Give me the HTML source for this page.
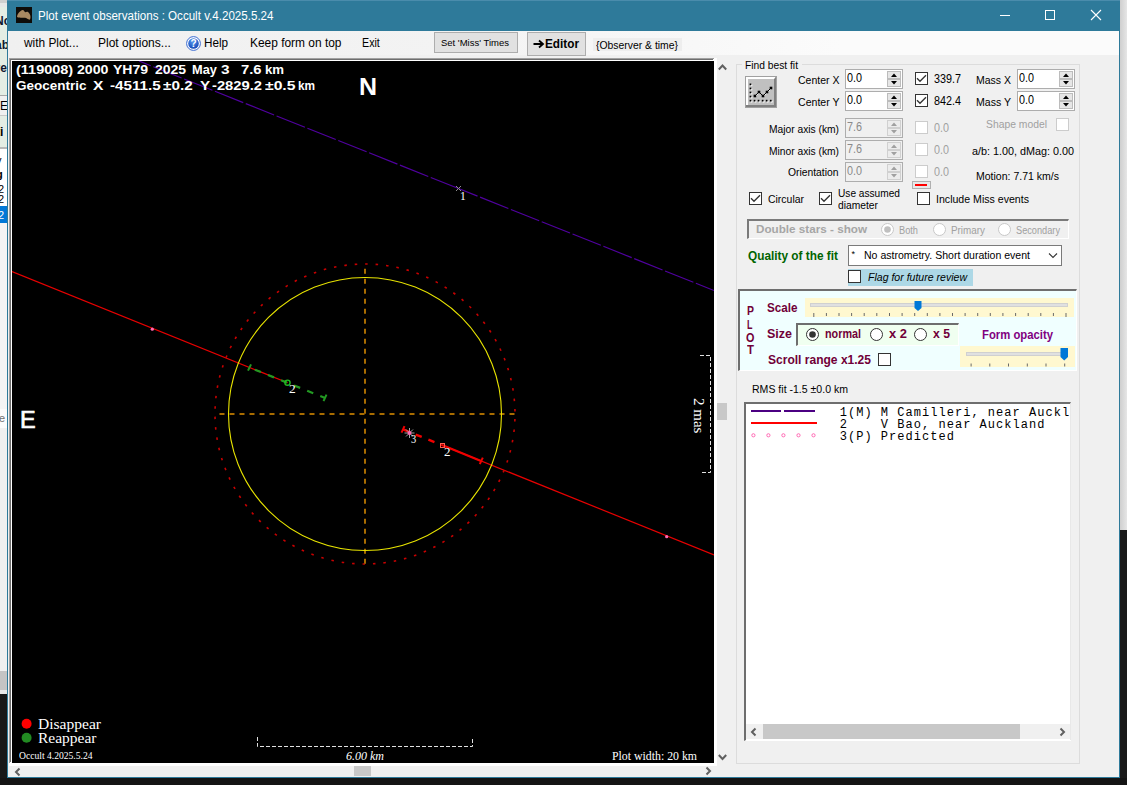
<!DOCTYPE html>
<html><head><meta charset="utf-8"><style>
html,body{margin:0;padding:0;width:1127px;height:785px;overflow:hidden;background:#f0f0f0;font-family:"Liberation Sans",sans-serif;}
#root{position:relative;width:1127px;height:785px;overflow:hidden;}
</style></head><body><div id="root">
<div style="position:absolute;left:0px;top:0px;width:7px;height:3px;background:#cfcfcf;"></div>
<div style="position:absolute;left:0px;top:3px;width:7px;height:4px;background:#e6e6e6;"></div>
<div style="position:absolute;left:0px;top:7px;width:7px;height:88px;background:#e4ede4;"></div>
<div style="position:absolute;left:0px;top:95px;width:7px;height:1px;background:#a8a8a8;"></div>
<div style="position:absolute;left:0px;top:96px;width:7px;height:19px;background:#f0f0f0;"></div>
<div style="position:absolute;left:0px;top:115px;width:7px;height:1px;background:#c8c8c8;"></div>
<div style="position:absolute;left:0px;top:116px;width:7px;height:31px;background:#e4ede4;"></div>
<div style="position:absolute;left:0px;top:147px;width:7px;height:2px;background:#b8b8b8;"></div>
<div style="position:absolute;left:0px;top:149px;width:7px;height:57px;background:#ffffff;"></div>
<div style="position:absolute;left:0px;top:205.5px;width:7px;height:17px;background:#0078d7;"></div>
<div style="position:absolute;left:0px;top:222.5px;width:7px;height:186px;background:#f4f4f4;"></div>
<div style="position:absolute;left:0px;top:408.5px;width:7px;height:20.5px;background:#fbfbfb;"></div>
<div style="position:absolute;left:0px;top:428px;width:7px;height:242px;background:#f0f0f0;"></div>
<div style="position:absolute;left:0px;top:671px;width:7px;height:19px;background:#c4c4c4;"></div>
<div style="position:absolute;left:0px;top:690px;width:7px;height:4px;background:#e8e8e8;"></div>
<div style="position:absolute;left:0px;top:694px;width:7px;height:91px;background:#181818;"></div>
<div style="position:absolute;left:-5px;top:21.04px;line-height:0;white-space:pre;font-family:'Liberation Sans',sans-serif;font-size:12px;font-weight:bold;font-style:normal;color:#101830;">Nc</div>
<div style="position:absolute;left:-5px;top:44.84px;line-height:0;white-space:pre;font-family:'Liberation Sans',sans-serif;font-size:12px;font-weight:bold;font-style:normal;color:#101830;">ab</div>
<div style="position:absolute;left:-4.5px;top:68.44px;line-height:0;white-space:pre;font-family:'Liberation Sans',sans-serif;font-size:12px;font-weight:bold;font-style:normal;color:#101830;">re</div>
<div style="position:absolute;left:0px;top:105.84px;line-height:0;white-space:pre;font-family:'Liberation Sans',sans-serif;font-size:12px;font-weight:normal;font-style:normal;color:#000;">E</div>
<div style="position:absolute;left:-4px;top:131.84px;line-height:0;white-space:pre;font-family:'Liberation Sans',sans-serif;font-size:12px;font-weight:bold;font-style:normal;color:#000;">ti</div>
<div style="position:absolute;left:-4px;top:159.69px;line-height:0;white-space:pre;font-family:'Liberation Sans',sans-serif;font-size:11px;font-weight:normal;font-style:normal;color:#000;">v</div>
<div style="position:absolute;left:-4px;top:173.69px;line-height:0;white-space:pre;font-family:'Liberation Sans',sans-serif;font-size:11px;font-weight:bold;font-style:normal;color:#000;">g</div>
<div style="position:absolute;left:-2px;top:189.49px;line-height:0;white-space:pre;font-family:'Liberation Sans',sans-serif;font-size:11px;font-weight:normal;font-style:normal;color:#000;">2</div>
<div style="position:absolute;left:-2px;top:199.49px;line-height:0;white-space:pre;font-family:'Liberation Sans',sans-serif;font-size:11px;font-weight:normal;font-style:normal;color:#000;">2</div>
<div style="position:absolute;left:-2px;top:214.79px;line-height:0;white-space:pre;font-family:'Liberation Sans',sans-serif;font-size:11px;font-weight:normal;font-style:normal;color:#fff;">2</div>
<div style="position:absolute;left:-6px;top:418.19px;line-height:0;white-space:pre;font-family:'Liberation Sans',sans-serif;font-size:11px;font-weight:normal;font-style:normal;color:#707070;">ile</div>
<div style="position:absolute;left:1120px;top:0px;width:7px;height:530px;background:linear-gradient(to right,#cfcfcf,#e6e6e6);"></div>
<div style="position:absolute;left:1120px;top:530px;width:7px;height:255px;background:#1a1a1a;"></div>
<div style="position:absolute;left:0px;top:778px;width:1127px;height:7px;background:#141414;"></div>
<div style="position:absolute;left:7px;top:0px;width:1113px;height:778px;background:#2e7a9a;"></div>
<div style="position:absolute;left:8px;top:31px;width:1111px;height:746px;background:#f0f0f0;"></div>
<div style="position:absolute;left:7px;top:0px;width:1113px;height:1px;background:#4a8cac;"></div>
<div style="position:absolute;left:16px;top:7px;width:16px;height:16px;background:#0e0c09;"></div>
<svg style="position:absolute;left:16px;top:7px" width="16" height="16"><path d="M1 9.5 C1.5 6.5 4.5 3.5 6.7 3 C8 3 8.5 5 9.2 5.2 C10 5 11 4.6 12 5 C13.5 6 14.5 8 14.5 10 C14.5 11.5 14 12.8 13.5 12.8 C12 12.5 10.5 11 9 10.8 C7 10.5 4.5 10.8 3 10.6 C1.8 10.4 0.9 10 1 9.5 Z" fill="#a98a62"/></svg>
<div style="position:absolute;left:37.5px;top:15.84px;line-height:0;white-space:pre;font-family:'Liberation Sans',sans-serif;font-size:12px;font-weight:normal;font-style:normal;color:#ffffff;transform:scaleX(0.9654);transform-origin:0 0;">Plot event observations : Occult v.4.2025.5.24</div>
<div style="position:absolute;left:1000px;top:15px;width:10px;height:1px;background:#fff;"></div>
<div style="position:absolute;left:1045px;top:10px;width:8px;height:8px;border:1px solid #fff;"></div>
<svg style="position:absolute;left:1090px;top:9px" width="12" height="12"><path d="M1 1 L11 11 M11 1 L1 11" stroke="#fff" stroke-width="1.1"/></svg>
<div style="position:absolute;left:8px;top:31px;width:1111px;height:24px;background:linear-gradient(to right,#f0f0f0 0%,#f3f3f3 40%,#fbfbfb 75%,#fbfbfb 100%);"></div>
<div style="position:absolute;left:24.29px;top:43.04px;line-height:0;white-space:pre;font-family:'Liberation Sans',sans-serif;font-size:12px;font-weight:normal;font-style:normal;color:#000;transform:scaleX(0.9889);transform-origin:0 0;">with Plot...</div>
<div style="position:absolute;left:98.3px;top:43.04px;line-height:0;white-space:pre;font-family:'Liberation Sans',sans-serif;font-size:12px;font-weight:normal;font-style:normal;color:#000;transform:scaleX(1.0017);transform-origin:0 0;">Plot options...</div>
<svg style="position:absolute;left:185.5px;top:35.5px" width="15" height="15"><defs><radialGradient id="hg" cx="45%" cy="30%" r="70%"><stop offset="0" stop-color="#5a9af0"/><stop offset="1" stop-color="#1448b8"/></radialGradient></defs><circle cx="7.5" cy="7.5" r="6.9" fill="#fff" stroke="#3a6ad0" stroke-width="1"/><circle cx="7.5" cy="7.5" r="5.3" fill="url(#hg)"/><text x="7.6" y="11.3" text-anchor="middle" font-family="Liberation Sans" font-weight="bold" font-size="10" fill="#fff">?</text></svg>
<div style="position:absolute;left:204.1px;top:43.04px;line-height:0;white-space:pre;font-family:'Liberation Sans',sans-serif;font-size:12px;font-weight:normal;font-style:normal;color:#000;transform:scaleX(0.9758);transform-origin:0 0;">Help</div>
<div style="position:absolute;left:250.2px;top:43.04px;line-height:0;white-space:pre;font-family:'Liberation Sans',sans-serif;font-size:12px;font-weight:normal;font-style:normal;color:#000;transform:scaleX(0.9937);transform-origin:0 0;">Keep form on top</div>
<div style="position:absolute;left:362.4px;top:43.04px;line-height:0;white-space:pre;font-family:'Liberation Sans',sans-serif;font-size:12px;font-weight:normal;font-style:normal;color:#000;transform:scaleX(0.8902);transform-origin:0 0;">Exit</div>
<div style="position:absolute;left:434px;top:32px;width:82px;height:19px;background:#e1e1e1;border:1px solid #adadad;"></div>
<div style="position:absolute;left:440.8px;top:42.80px;line-height:0;white-space:pre;font-family:'Liberation Sans',sans-serif;font-size:9.8px;font-weight:normal;font-style:normal;color:#000;transform:scaleX(0.9683);transform-origin:0 0;">Set 'Miss' Times</div>
<div style="position:absolute;left:527px;top:32px;width:57px;height:22px;background:#e1e1e1;border:1px solid #adadad;"></div>
<svg style="position:absolute;left:533px;top:39px" width="12" height="10"><path d="M0.5 5 H9.5 M6 1.5 L10 5 L6 8.5" fill="none" stroke="#000" stroke-width="1.8"/></svg>
<div style="position:absolute;left:544.5px;top:44.09px;line-height:0;white-space:pre;font-family:'Liberation Sans',sans-serif;font-size:13px;font-weight:bold;font-style:normal;color:#000;transform:scaleX(0.9052);transform-origin:0 0;">Editor</div>
<div style="position:absolute;left:593px;top:38px;width:89px;height:13px;background:#eeeeee;"></div>
<div style="position:absolute;left:596px;top:45.01px;line-height:0;white-space:pre;font-family:'Liberation Sans',sans-serif;font-size:11.5px;font-weight:normal;font-style:normal;color:#000;transform:scaleX(0.9034);transform-origin:0 0;">{Observer &amp; time}</div>
<div style="position:absolute;left:9px;top:58px;width:708px;height:708px;background:#ffffff;"></div>
<div style="position:absolute;left:9px;top:58px;width:705px;height:1px;background:#a0a0a0;"></div>
<div style="position:absolute;left:9px;top:59px;width:704px;height:1px;background:#6e6e6e;"></div>
<div style="position:absolute;left:9px;top:58px;width:1px;height:705px;background:#a0a0a0;"></div>
<div style="position:absolute;left:10px;top:59px;width:1px;height:703px;background:#6e6e6e;"></div>
<div style="position:absolute;left:12px;top:61px;width:702px;height:702px;background:#000000;"></div>
<div style="position:absolute;left:11px;top:766px;width:706px;height:11px;background:#f0f0f0;"></div>
<svg style="position:absolute;left:12.5px;top:766.5px" width="10" height="10"><path d="M6.5 1.5 L3 5 L6.5 8.5" fill="none" stroke="#606060" stroke-width="2"/></svg>
<svg style="position:absolute;left:703px;top:766px" width="10" height="10"><path d="M3.5 1.5 L7 5 L3.5 8.5" fill="none" stroke="#606060" stroke-width="2"/></svg>
<div style="position:absolute;left:354px;top:766px;width:17px;height:10px;background:#c8c8c8;"></div>
<div style="position:absolute;left:717px;top:57px;width:14px;height:720px;background:#f0f0f0;"></div>
<svg style="position:absolute;left:717px;top:62px" width="11" height="10"><path d="M1.8 7.5 L5.5 3.5 L9.2 7.5" fill="none" stroke="#606060" stroke-width="2"/></svg>
<svg style="position:absolute;left:717px;top:752px" width="11" height="10"><path d="M1.8 3 L5.5 7 L9.2 3" fill="none" stroke="#606060" stroke-width="2"/></svg>
<div style="position:absolute;left:717px;top:403px;width:10px;height:17px;background:#c8c8c8;"></div>
<svg style="position:absolute;left:12px;top:61px" width="702" height="702" viewBox="12 61 702 702">
<line x1="139" y1="61" x2="458.5" y2="188.5" stroke="#5000a0" stroke-width="1.15" stroke-dasharray="30.5 2.7" stroke-dashoffset="17.85"/>
<line x1="458.5" y1="188.5" x2="714" y2="290.5" stroke="#5000a0" stroke-width="1.15" stroke-dasharray="30.5 2.7" stroke-dashoffset="10"/>
<line x1="12" y1="271.6" x2="287.6" y2="382.8" stroke="#e80000" stroke-width="1.2"/>
<line x1="442" y1="445.1" x2="714" y2="554.9" stroke="#e80000" stroke-width="1.2"/>
<line x1="442" y1="445.1" x2="481" y2="460.9" stroke="#f00000" stroke-width="2.2"/>
<line x1="403" y1="429.4" x2="442" y2="445.1" stroke="#f00000" stroke-width="2.4" stroke-dasharray="6.5 7.2"/>
<line x1="249.5" y1="367.5" x2="325" y2="397.9" stroke="#229922" stroke-width="2.2" stroke-dasharray="6.5 7.6" stroke-dashoffset="8.3"/>
<circle cx="365" cy="414" r="150" fill="none" stroke="#c80000" stroke-width="1.6" stroke-dasharray="2.5 7.972" stroke-dashoffset="5.36"/>
<line x1="215" y1="414" x2="515" y2="414" stroke="#a86c00" stroke-width="2" stroke-dasharray="5 5" stroke-dashoffset="-4.5"/>
<line x1="365" y1="264" x2="365" y2="564" stroke="#a86c00" stroke-width="2" stroke-dasharray="5 5" stroke-dashoffset="-4.8"/>
<circle cx="365" cy="414" r="136.5" fill="none" stroke="#e8e400" stroke-width="1.1"/>
<!-- ticks -->
<line x1="248" y1="370.7" x2="251" y2="364.3" stroke="#229922" stroke-width="2"/>
<line x1="323.5" y1="401.1" x2="326.5" y2="394.7" stroke="#229922" stroke-width="2"/>
<line x1="401.5" y1="432.6" x2="404.5" y2="426.2" stroke="#f00000" stroke-width="2"/>
<line x1="479.8" y1="464.1" x2="482.8" y2="457.7" stroke="#f00000" stroke-width="2"/>
<circle cx="287.5" cy="382.7" r="2.6" fill="none" stroke="#22bb22" stroke-width="1.4"/>
<rect x="440.5" y="443.5" width="4" height="4" fill="none" stroke="#ff6050" stroke-width="1"/>
<circle cx="152.3" cy="329.2" r="1.6" fill="#ff69b4"/>
<circle cx="666.7" cy="536.7" r="1.6" fill="#ff69b4"/>
<g stroke="#a0a0a0" stroke-width="1">
<line x1="404.5" y1="433" x2="414.5" y2="433"/><line x1="409.5" y1="428" x2="409.5" y2="438"/>
<line x1="406" y1="429.5" x2="413" y2="436.5"/><line x1="413" y1="429.5" x2="406" y2="436.5"/>
</g>
<circle cx="409.5" cy="433" r="2" fill="#ff69b4"/>
<g stroke="#909090" stroke-width="1">
<line x1="456" y1="186" x2="461" y2="191"/><line x1="461" y1="186" x2="456" y2="191"/>
</g>
<!-- scale bar -->
<path d="M257.5 737 V746.5 H472.5 V737" fill="none" stroke="#e0e0e0" stroke-width="1" stroke-dasharray="4 2"/>
<!-- 2 mas bar -->
<path d="M700 355.5 H710.5 V472.5 H700" fill="none" stroke="#e0e0e0" stroke-width="1" stroke-dasharray="4 2"/>
<circle cx="26.6" cy="723.7" r="5" fill="#ff0000"/>
<circle cx="26.6" cy="737.7" r="5" fill="#228b22"/>
</svg>
<div style="position:absolute;left:692.5px;top:397.5px;width:12px;height:35px;"><div style="position:absolute;left:12px;top:0;transform-origin:0 0;transform:rotate(90deg);white-space:pre;font-family:'Liberation Serif',serif;font-size:15px;line-height:12px;color:#fff;">2 mas</div></div>
<div style="position:absolute;left:15.7px;top:70.49px;line-height:0;white-space:pre;font-family:'Liberation Sans',sans-serif;font-size:13px;font-weight:bold;font-style:normal;color:#fff;transform:scaleX(1.1139);transform-origin:0 0;">(119008)</div>
<div style="position:absolute;left:76.8px;top:70.49px;line-height:0;white-space:pre;font-family:'Liberation Sans',sans-serif;font-size:13px;font-weight:bold;font-style:normal;color:#fff;transform:scaleX(1.0875);transform-origin:0 0;">2000</div>
<div style="position:absolute;left:113.0px;top:70.49px;line-height:0;white-space:pre;font-family:'Liberation Sans',sans-serif;font-size:13px;font-weight:bold;font-style:normal;color:#fff;transform:scaleX(1.0778);transform-origin:0 0;">YH79</div>
<div style="position:absolute;left:155.3px;top:70.49px;line-height:0;white-space:pre;font-family:'Liberation Sans',sans-serif;font-size:13px;font-weight:bold;font-style:normal;color:#fff;transform:scaleX(1.0770);transform-origin:0 0;">2025</div>
<div style="position:absolute;left:191.5px;top:70.49px;line-height:0;white-space:pre;font-family:'Liberation Sans',sans-serif;font-size:13px;font-weight:bold;font-style:normal;color:#fff;transform:scaleX(0.9824);transform-origin:0 0;">May</div>
<div style="position:absolute;left:220.9px;top:70.49px;line-height:0;white-space:pre;font-family:'Liberation Sans',sans-serif;font-size:13px;font-weight:bold;font-style:normal;color:#fff;transform:scaleX(1.1857);transform-origin:0 0;">3</div>
<div style="position:absolute;left:241.3px;top:70.49px;line-height:0;white-space:pre;font-family:'Liberation Sans',sans-serif;font-size:13px;font-weight:bold;font-style:normal;color:#fff;transform:scaleX(1.1378);transform-origin:0 0;">7.6</div>
<div style="position:absolute;left:265.4px;top:70.49px;line-height:0;white-space:pre;font-family:'Liberation Sans',sans-serif;font-size:13px;font-weight:bold;font-style:normal;color:#fff;transform:scaleX(1.0148);transform-origin:0 0;">km</div>
<div style="position:absolute;left:16.4px;top:86.49px;line-height:0;white-space:pre;font-family:'Liberation Sans',sans-serif;font-size:13px;font-weight:bold;font-style:normal;color:#fff;transform:scaleX(1.0387);transform-origin:0 0;">Geocentric</div>
<div style="position:absolute;left:93.0px;top:86.49px;line-height:0;white-space:pre;font-family:'Liberation Sans',sans-serif;font-size:13px;font-weight:bold;font-style:normal;color:#fff;transform:scaleX(1.2000);transform-origin:0 0;">X</div>
<div style="position:absolute;left:110.1px;top:86.49px;line-height:0;white-space:pre;font-family:'Liberation Sans',sans-serif;font-size:13px;font-weight:bold;font-style:normal;color:#fff;transform:scaleX(1.1705);transform-origin:0 0;">-4511.5</div>
<div style="position:absolute;left:162.8px;top:86.49px;line-height:0;white-space:pre;font-family:'Liberation Sans',sans-serif;font-size:13px;font-weight:bold;font-style:normal;color:#fff;transform:scaleX(1.1771);transform-origin:0 0;">±0.2</div>
<div style="position:absolute;left:199.8px;top:86.49px;line-height:0;white-space:pre;font-family:'Liberation Sans',sans-serif;font-size:13px;font-weight:bold;font-style:normal;color:#fff;transform:scaleX(1.1667);transform-origin:0 0;">Y</div>
<div style="position:absolute;left:211.8px;top:86.49px;line-height:0;white-space:pre;font-family:'Liberation Sans',sans-serif;font-size:13px;font-weight:bold;font-style:normal;color:#fff;transform:scaleX(1.1354);transform-origin:0 0;">-2829.2</div>
<div style="position:absolute;left:264.6px;top:86.49px;line-height:0;white-space:pre;font-family:'Liberation Sans',sans-serif;font-size:13px;font-weight:bold;font-style:normal;color:#fff;transform:scaleX(1.2091);transform-origin:0 0;">±0.5</div>
<div style="position:absolute;left:297.8px;top:86.49px;line-height:0;white-space:pre;font-family:'Liberation Sans',sans-serif;font-size:13px;font-weight:bold;font-style:normal;color:#fff;transform:scaleX(0.9106);transform-origin:0 0;">km</div>
<div style="position:absolute;left:359.26px;top:86.68px;line-height:0;white-space:pre;font-family:'Liberation Sans',sans-serif;font-size:24px;font-weight:bold;font-style:normal;color:#fff;transform:scaleX(1.0400);transform-origin:0 0;">N</div>
<div style="position:absolute;left:20.19px;top:419.81px;line-height:0;white-space:pre;font-family:'Liberation Sans',sans-serif;font-size:24.5px;font-weight:normal;font-style:normal;color:#fff;transform:scaleX(0.9571);transform-origin:0 0;-webkit-text-stroke:0.7px #fff;">E</div>
<div style="position:absolute;left:459.84px;top:195.65px;line-height:0;white-space:pre;font-family:'Liberation Serif',sans-serif;font-size:13.5px;font-weight:normal;font-style:normal;color:#fff;transform:scaleX(0.8600);transform-origin:0 0;">1</div>
<div style="position:absolute;left:289.0px;top:389.45px;line-height:0;white-space:pre;font-family:'Liberation Serif',sans-serif;font-size:13.5px;font-weight:normal;font-style:normal;color:#fff;transform:scaleX(1.0000);transform-origin:0 0;">2</div>
<div style="position:absolute;left:411.0px;top:439.45px;line-height:0;white-space:pre;font-family:'Liberation Serif',sans-serif;font-size:13.5px;font-weight:normal;font-style:normal;color:#fff;transform:scaleX(0.7714);transform-origin:0 0;">3</div>
<div style="position:absolute;left:444.2px;top:452.45px;line-height:0;white-space:pre;font-family:'Liberation Serif',sans-serif;font-size:13.5px;font-weight:normal;font-style:normal;color:#fff;transform:scaleX(0.9667);transform-origin:0 0;">2</div>
<div style="position:absolute;left:38px;top:723.77px;line-height:0;white-space:pre;font-family:'Liberation Serif',sans-serif;font-size:15.5px;font-weight:normal;font-style:normal;color:#fff;transform:scaleX(1.0025);transform-origin:0 0;">Disappear</div>
<div style="position:absolute;left:38px;top:737.77px;line-height:0;white-space:pre;font-family:'Liberation Serif',sans-serif;font-size:15.5px;font-weight:normal;font-style:normal;color:#fff;transform:scaleX(0.9995);transform-origin:0 0;">Reappear</div>
<div style="position:absolute;left:19px;top:755.63px;line-height:0;white-space:pre;font-family:'Liberation Serif',sans-serif;font-size:10px;font-weight:normal;font-style:normal;color:#fff;transform:scaleX(0.9588);transform-origin:0 0;">Occult 4.2025.5.24</div>
<div style="position:absolute;left:346px;top:756.28px;line-height:0;white-space:pre;font-family:'Liberation Serif',sans-serif;font-size:12.5px;font-weight:normal;font-style:italic;color:#fff;transform:scaleX(0.9601);transform-origin:0 0;">6.00 km</div>
<div style="position:absolute;left:612px;top:756.28px;line-height:0;white-space:pre;font-family:'Liberation Serif',sans-serif;font-size:12.5px;font-weight:normal;font-style:normal;color:#fff;transform:scaleX(0.9449);transform-origin:0 0;">Plot width: 20 km</div>
<div style="position:absolute;left:736px;top:64px;width:342px;height:698px;border:1px solid #dcdcdc;"></div>
<div style="position:absolute;left:742px;top:58px;width:60px;height:12px;background:#f0f0f0;"></div>
<div style="position:absolute;left:745px;top:65.19px;line-height:0;white-space:pre;font-family:'Liberation Sans',sans-serif;font-size:11px;font-weight:normal;font-style:normal;color:#000;transform:scaleX(0.9321);transform-origin:0 0;">Find best fit</div>
<svg style="position:absolute;left:745px;top:76px" width="32" height="32">
<rect x="0.5" y="0.5" width="31" height="31" fill="#c0c0c0" stroke="#a0a0a0"/>
<path d="M1 1 H30 V3 H3 V30 H1 Z" fill="#fff"/>
<path d="M31 1 V31 H1 V29 H29 V3 Z" fill="#808080"/>
<g fill="#fff"><rect x="5.6" y="8.5" width="1.7" height="1.7"/><rect x="5.6" y="12.6" width="1.7" height="1.7"/><rect x="5.6" y="16.6" width="1.7" height="1.7"/><rect x="5.6" y="20.7" width="1.7" height="1.7"/><rect x="5.6" y="24.8" width="1.7" height="1.7"/><rect x="9.7" y="24.8" width="1.7" height="1.7"/><rect x="13.7" y="24.8" width="1.7" height="1.7"/><rect x="17.8" y="24.8" width="1.7" height="1.7"/><rect x="21.8" y="24.8" width="1.7" height="1.7"/><rect x="25.9" y="24.8" width="1.7" height="1.7"/></g>
<path d="M10.5 20.5 L14.5 16.5 L18.5 20.5 L22.5 16.5 L26.5 12.5" fill="none" stroke="#fff" stroke-width="1" opacity="0.6"/>
<path d="M9.9 20 L14 16 L18 20 L22 16 L26 12" fill="none" stroke="#000" stroke-width="1"/>
<g fill="#000"><rect x="4.6" y="7.5" width="1.7" height="1.7"/><rect x="4.6" y="11.6" width="1.7" height="1.7"/><rect x="4.6" y="15.6" width="1.7" height="1.7"/><rect x="4.6" y="19.7" width="1.7" height="1.7"/><rect x="4.6" y="23.8" width="1.7" height="1.7"/><rect x="8.7" y="23.8" width="1.7" height="1.7"/><rect x="12.7" y="23.8" width="1.7" height="1.7"/><rect x="16.8" y="23.8" width="1.7" height="1.7"/><rect x="20.8" y="23.8" width="1.7" height="1.7"/><rect x="24.9" y="23.8" width="1.7" height="1.7"/><rect x="8.6" y="18.7" width="2.6" height="2.6"/><rect x="12.7" y="14.7" width="2.6" height="2.6"/><rect x="16.7" y="18.7" width="2.6" height="2.6"/><rect x="20.7" y="14.7" width="2.6" height="2.6"/><rect x="24.7" y="10.7" width="2.6" height="2.6"/></g>
</svg>
<div style="position:absolute;left:797.5px;top:80.19px;line-height:0;white-space:pre;font-family:'Liberation Sans',sans-serif;font-size:11px;font-weight:normal;font-style:normal;color:#000;transform:scaleX(0.9557);transform-origin:0 0;">Center X</div>
<div style="position:absolute;left:797.5px;top:102.19px;line-height:0;white-space:pre;font-family:'Liberation Sans',sans-serif;font-size:11px;font-weight:normal;font-style:normal;color:#000;transform:scaleX(0.9602);transform-origin:0 0;">Center Y</div>
<div style="position:absolute;left:845px;top:69px;width:56px;height:18px;background:#fff;border:1px solid #adadad;"></div>
<svg style="position:absolute;left:887px;top:71px" width="14" height="16">
<rect x="0.5" y="0.5" width="13" height="7" fill="#e6e6e6" stroke="#bcbcbc"/>
<rect x="0.5" y="8.5" width="13" height="7" fill="#e6e6e6" stroke="#bcbcbc"/>
<path d="M4 6 L7 2.5 L10 6 Z" fill="#000"/>
<path d="M4 10 L7 13.5 L10 10 Z" fill="#000"/>
</svg>
<div style="position:absolute;left:847px;top:77.67px;line-height:0;white-space:pre;font-family:'Liberation Sans',sans-serif;font-size:12.5px;font-weight:normal;font-style:normal;color:#000;transform:scaleX(0.8625);transform-origin:0 0;">0.0</div>
<div style="position:absolute;left:845px;top:91px;width:56px;height:18px;background:#fff;border:1px solid #adadad;"></div>
<svg style="position:absolute;left:887px;top:93px" width="14" height="16">
<rect x="0.5" y="0.5" width="13" height="7" fill="#e6e6e6" stroke="#bcbcbc"/>
<rect x="0.5" y="8.5" width="13" height="7" fill="#e6e6e6" stroke="#bcbcbc"/>
<path d="M4 6 L7 2.5 L10 6 Z" fill="#000"/>
<path d="M4 10 L7 13.5 L10 10 Z" fill="#000"/>
</svg>
<div style="position:absolute;left:847px;top:99.67px;line-height:0;white-space:pre;font-family:'Liberation Sans',sans-serif;font-size:12.5px;font-weight:normal;font-style:normal;color:#000;transform:scaleX(0.8625);transform-origin:0 0;">0.0</div>
<div style="position:absolute;left:915px;top:72px;width:11px;height:11px;background:#fff;border:1px solid #333333;"></div>
<svg style="position:absolute;left:915px;top:72px" width="13" height="13"><path d="M2 6.2 L5 9.2 L11 3.2" fill="none" stroke="#333" stroke-width="1.35"/></svg>
<div style="position:absolute;left:915px;top:94px;width:11px;height:11px;background:#fff;border:1px solid #333333;"></div>
<svg style="position:absolute;left:915px;top:94px" width="13" height="13"><path d="M2 6.2 L5 9.2 L11 3.2" fill="none" stroke="#333" stroke-width="1.35"/></svg>
<div style="position:absolute;left:934px;top:78.84px;line-height:0;white-space:pre;font-family:'Liberation Sans',sans-serif;font-size:12px;font-weight:normal;font-style:normal;color:#000;transform:scaleX(0.8991);transform-origin:0 0;">339.7</div>
<div style="position:absolute;left:934px;top:100.84px;line-height:0;white-space:pre;font-family:'Liberation Sans',sans-serif;font-size:12px;font-weight:normal;font-style:normal;color:#000;transform:scaleX(0.8991);transform-origin:0 0;">842.4</div>
<div style="position:absolute;left:976px;top:80.19px;line-height:0;white-space:pre;font-family:'Liberation Sans',sans-serif;font-size:11px;font-weight:normal;font-style:normal;color:#000;transform:scaleX(0.9540);transform-origin:0 0;">Mass X</div>
<div style="position:absolute;left:976px;top:102.19px;line-height:0;white-space:pre;font-family:'Liberation Sans',sans-serif;font-size:11px;font-weight:normal;font-style:normal;color:#000;transform:scaleX(0.9593);transform-origin:0 0;">Mass Y</div>
<div style="position:absolute;left:1017px;top:69px;width:56px;height:18px;background:#fff;border:1px solid #adadad;"></div>
<svg style="position:absolute;left:1059px;top:71px" width="14" height="16">
<rect x="0.5" y="0.5" width="13" height="7" fill="#e6e6e6" stroke="#bcbcbc"/>
<rect x="0.5" y="8.5" width="13" height="7" fill="#e6e6e6" stroke="#bcbcbc"/>
<path d="M4 6 L7 2.5 L10 6 Z" fill="#000"/>
<path d="M4 10 L7 13.5 L10 10 Z" fill="#000"/>
</svg>
<div style="position:absolute;left:1019px;top:77.67px;line-height:0;white-space:pre;font-family:'Liberation Sans',sans-serif;font-size:12.5px;font-weight:normal;font-style:normal;color:#000;transform:scaleX(0.8625);transform-origin:0 0;">0.0</div>
<div style="position:absolute;left:1017px;top:91px;width:56px;height:18px;background:#fff;border:1px solid #adadad;"></div>
<svg style="position:absolute;left:1059px;top:93px" width="14" height="16">
<rect x="0.5" y="0.5" width="13" height="7" fill="#e6e6e6" stroke="#bcbcbc"/>
<rect x="0.5" y="8.5" width="13" height="7" fill="#e6e6e6" stroke="#bcbcbc"/>
<path d="M4 6 L7 2.5 L10 6 Z" fill="#000"/>
<path d="M4 10 L7 13.5 L10 10 Z" fill="#000"/>
</svg>
<div style="position:absolute;left:1019px;top:99.67px;line-height:0;white-space:pre;font-family:'Liberation Sans',sans-serif;font-size:12.5px;font-weight:normal;font-style:normal;color:#000;transform:scaleX(0.8625);transform-origin:0 0;">0.0</div>
<div style="position:absolute;left:769px;top:128.69px;line-height:0;white-space:pre;font-family:'Liberation Sans',sans-serif;font-size:11px;font-weight:normal;font-style:normal;color:#000;transform:scaleX(0.9312);transform-origin:0 0;">Major axis (km)</div>
<div style="position:absolute;left:769px;top:150.69px;line-height:0;white-space:pre;font-family:'Liberation Sans',sans-serif;font-size:11px;font-weight:normal;font-style:normal;color:#000;transform:scaleX(0.9312);transform-origin:0 0;">Minor axis (km)</div>
<div style="position:absolute;left:787.5px;top:171.69px;line-height:0;white-space:pre;font-family:'Liberation Sans',sans-serif;font-size:11px;font-weight:normal;font-style:normal;color:#000;transform:scaleX(0.9384);transform-origin:0 0;">Orientation</div>
<div style="position:absolute;left:845px;top:118px;width:56px;height:18px;background:#f0f0f0;border:1px solid #adadad;"></div>
<svg style="position:absolute;left:887px;top:120px" width="14" height="16">
<rect x="0.5" y="0.5" width="13" height="7" fill="#ececec" stroke="#d0d0d0"/>
<rect x="0.5" y="8.5" width="13" height="7" fill="#ececec" stroke="#d0d0d0"/>
<path d="M4 6 L7 2.5 L10 6 Z" fill="#a0a0a0"/>
<path d="M4 10 L7 13.5 L10 10 Z" fill="#a0a0a0"/>
</svg>
<div style="position:absolute;left:847px;top:126.67px;line-height:0;white-space:pre;font-family:'Liberation Sans',sans-serif;font-size:12.5px;font-weight:normal;font-style:normal;color:#8a8a8a;transform:scaleX(0.8625);transform-origin:0 0;">7.6</div>
<div style="position:absolute;left:845px;top:140px;width:56px;height:18px;background:#f0f0f0;border:1px solid #adadad;"></div>
<svg style="position:absolute;left:887px;top:142px" width="14" height="16">
<rect x="0.5" y="0.5" width="13" height="7" fill="#ececec" stroke="#d0d0d0"/>
<rect x="0.5" y="8.5" width="13" height="7" fill="#ececec" stroke="#d0d0d0"/>
<path d="M4 6 L7 2.5 L10 6 Z" fill="#a0a0a0"/>
<path d="M4 10 L7 13.5 L10 10 Z" fill="#a0a0a0"/>
</svg>
<div style="position:absolute;left:847px;top:148.67px;line-height:0;white-space:pre;font-family:'Liberation Sans',sans-serif;font-size:12.5px;font-weight:normal;font-style:normal;color:#8a8a8a;transform:scaleX(0.8625);transform-origin:0 0;">7.6</div>
<div style="position:absolute;left:845px;top:162px;width:56px;height:18px;background:#f0f0f0;border:1px solid #adadad;"></div>
<svg style="position:absolute;left:887px;top:164px" width="14" height="16">
<rect x="0.5" y="0.5" width="13" height="7" fill="#ececec" stroke="#d0d0d0"/>
<rect x="0.5" y="8.5" width="13" height="7" fill="#ececec" stroke="#d0d0d0"/>
<path d="M4 6 L7 2.5 L10 6 Z" fill="#a0a0a0"/>
<path d="M4 10 L7 13.5 L10 10 Z" fill="#a0a0a0"/>
</svg>
<div style="position:absolute;left:847px;top:170.67px;line-height:0;white-space:pre;font-family:'Liberation Sans',sans-serif;font-size:12.5px;font-weight:normal;font-style:normal;color:#8a8a8a;transform:scaleX(0.8625);transform-origin:0 0;">0.0</div>
<div style="position:absolute;left:915px;top:121px;width:11px;height:11px;background:#fff;border:1px solid #cccccc;"></div>
<div style="position:absolute;left:915px;top:143px;width:11px;height:11px;background:#fff;border:1px solid #cccccc;"></div>
<div style="position:absolute;left:915px;top:165px;width:11px;height:11px;background:#fff;border:1px solid #cccccc;"></div>
<div style="position:absolute;left:934px;top:127.84px;line-height:0;white-space:pre;font-family:'Liberation Sans',sans-serif;font-size:12px;font-weight:normal;font-style:normal;color:#a0a0a0;transform:scaleX(0.8989);transform-origin:0 0;">0.0</div>
<div style="position:absolute;left:934px;top:149.84px;line-height:0;white-space:pre;font-family:'Liberation Sans',sans-serif;font-size:12px;font-weight:normal;font-style:normal;color:#a0a0a0;transform:scaleX(0.8989);transform-origin:0 0;">0.0</div>
<div style="position:absolute;left:934px;top:171.84px;line-height:0;white-space:pre;font-family:'Liberation Sans',sans-serif;font-size:12px;font-weight:normal;font-style:normal;color:#a0a0a0;transform:scaleX(0.8989);transform-origin:0 0;">0.0</div>
<div style="position:absolute;left:986px;top:124.19px;line-height:0;white-space:pre;font-family:'Liberation Sans',sans-serif;font-size:11px;font-weight:normal;font-style:normal;color:#a0a0a0;transform:scaleX(0.9409);transform-origin:0 0;">Shape model</div>
<div style="position:absolute;left:1056px;top:118px;width:11px;height:11px;background:#fff;border:1px solid #cccccc;"></div>
<div style="position:absolute;left:972px;top:151.19px;line-height:0;white-space:pre;font-family:'Liberation Sans',sans-serif;font-size:11px;font-weight:normal;font-style:normal;color:#000;transform:scaleX(0.9811);transform-origin:0 0;">a/b: 1.00, dMag: 0.00</div>
<div style="position:absolute;left:976px;top:175.69px;line-height:0;white-space:pre;font-family:'Liberation Sans',sans-serif;font-size:11px;font-weight:normal;font-style:normal;color:#000;transform:scaleX(0.9559);transform-origin:0 0;">Motion: 7.71 km/s</div>
<div style="position:absolute;left:912px;top:181px;width:17px;height:6px;background:#e8e8e8;border:1px solid #b0b0b0;"></div>
<div style="position:absolute;left:915px;top:183.5px;width:12px;height:2px;background:#ff0000;"></div>
<div style="position:absolute;left:749px;top:192px;width:11px;height:11px;background:#fff;border:1px solid #333333;"></div>
<svg style="position:absolute;left:749px;top:192px" width="13" height="13"><path d="M2 6.2 L5 9.2 L11 3.2" fill="none" stroke="#333" stroke-width="1.35"/></svg>
<div style="position:absolute;left:767.5px;top:199.19px;line-height:0;white-space:pre;font-family:'Liberation Sans',sans-serif;font-size:11px;font-weight:normal;font-style:normal;color:#000;transform:scaleX(0.9497);transform-origin:0 0;">Circular</div>
<div style="position:absolute;left:819px;top:192px;width:11px;height:11px;background:#fff;border:1px solid #333333;"></div>
<svg style="position:absolute;left:819px;top:192px" width="13" height="13"><path d="M2 6.2 L5 9.2 L11 3.2" fill="none" stroke="#333" stroke-width="1.35"/></svg>
<div style="position:absolute;left:838px;top:192.69px;line-height:0;white-space:pre;font-family:'Liberation Sans',sans-serif;font-size:11px;font-weight:normal;font-style:normal;color:#000;transform:scaleX(0.9217);transform-origin:0 0;">Use assumed</div>
<div style="position:absolute;left:838px;top:204.69px;line-height:0;white-space:pre;font-family:'Liberation Sans',sans-serif;font-size:11px;font-weight:normal;font-style:normal;color:#000;transform:scaleX(0.9346);transform-origin:0 0;">diameter</div>
<div style="position:absolute;left:917px;top:192px;width:11px;height:11px;background:#fff;border:1px solid #333333;"></div>
<div style="position:absolute;left:936px;top:199.19px;line-height:0;white-space:pre;font-family:'Liberation Sans',sans-serif;font-size:11px;font-weight:normal;font-style:normal;color:#000;transform:scaleX(0.9626);transform-origin:0 0;">Include Miss events</div>
<div style="position:absolute;left:747px;top:219px;width:322px;height:20px;background:#f0f0f0;border-top:2px solid #7a7a7a;border-left:2px solid #7a7a7a;border-right:1px solid #fff;border-bottom:1px solid #fff;box-sizing:border-box;"></div>
<div style="position:absolute;left:755.5px;top:228.91px;line-height:0;white-space:pre;font-family:'Liberation Sans',sans-serif;font-size:11.8px;font-weight:bold;font-style:normal;color:#a6a6a6;transform:scaleX(0.9902);transform-origin:0 0;">Double stars - show</div>
<svg style="position:absolute;left:881px;top:223px" width="13" height="13"><circle cx="6.5" cy="6.5" r="6" fill="#fff" stroke="#c8c8c8"/><circle cx="6.5" cy="6.5" r="3.3" fill="#c0c0c0"/></svg>
<div style="position:absolute;left:899px;top:230.53px;line-height:0;white-space:pre;font-family:'Liberation Sans',sans-serif;font-size:10px;font-weight:normal;font-style:normal;color:#a0a0a0;transform:scaleX(0.9233);transform-origin:0 0;">Both</div>
<svg style="position:absolute;left:933px;top:223px" width="13" height="13"><circle cx="6.5" cy="6.5" r="6" fill="#fff" stroke="#c8c8c8"/></svg>
<div style="position:absolute;left:951px;top:230.53px;line-height:0;white-space:pre;font-family:'Liberation Sans',sans-serif;font-size:10px;font-weight:normal;font-style:normal;color:#a0a0a0;transform:scaleX(0.9868);transform-origin:0 0;">Primary</div>
<svg style="position:absolute;left:998px;top:223px" width="13" height="13"><circle cx="6.5" cy="6.5" r="6" fill="#fff" stroke="#c8c8c8"/></svg>
<div style="position:absolute;left:1016px;top:230.53px;line-height:0;white-space:pre;font-family:'Liberation Sans',sans-serif;font-size:10px;font-weight:normal;font-style:normal;color:#a0a0a0;transform:scaleX(0.9203);transform-origin:0 0;">Secondary</div>
<div style="position:absolute;left:748px;top:255.84px;line-height:0;white-space:pre;font-family:'Liberation Sans',sans-serif;font-size:12px;font-weight:bold;font-style:normal;color:#006400;transform:scaleX(0.9853);transform-origin:0 0;">Quality of the fit</div>
<div style="position:absolute;left:848px;top:245px;width:212px;height:19px;background:#fff;border:1px solid #7a7a7a;"></div>
<div style="position:absolute;left:851.5px;top:253.88px;line-height:0;white-space:pre;font-family:'Liberation Sans',sans-serif;font-size:9px;font-weight:normal;font-style:normal;color:#000;">*</div>
<div style="position:absolute;left:864px;top:255.19px;line-height:0;white-space:pre;font-family:'Liberation Sans',sans-serif;font-size:11px;font-weight:normal;font-style:normal;color:#000;transform:scaleX(0.9571);transform-origin:0 0;">No astrometry. Short duration event</div>
<svg style="position:absolute;left:1048px;top:252px" width="10" height="8"><path d="M1 1.5 L5 5.5 L9 1.5" fill="none" stroke="#333" stroke-width="1.1"/></svg>
<div style="position:absolute;left:848px;top:269px;width:125px;height:17px;background:#add8e6;"></div>
<div style="position:absolute;left:848px;top:270px;width:11px;height:11px;background:#fff;border:1px solid #333;"></div>
<div style="position:absolute;left:868px;top:277.19px;line-height:0;white-space:pre;font-family:'Liberation Sans',sans-serif;font-size:11px;font-weight:normal;font-style:italic;color:#000;transform:scaleX(0.9581);transform-origin:0 0;">Flag for future review</div>
<div style="position:absolute;left:738px;top:289px;width:339px;height:82px;background:#f0ffff;border-top:2px solid #6e6e6e;border-left:2px solid #6e6e6e;border-right:1px solid #fff;border-bottom:1px solid #fff;box-sizing:border-box;"></div>
<div style="position:absolute;left:746.8px;top:311.44px;line-height:0;white-space:pre;font-family:'Liberation Sans',sans-serif;font-size:12.3px;font-weight:bold;font-style:normal;color:#700038;transform:scaleX(0.8500);transform-origin:0 0;">P</div>
<div style="position:absolute;left:747.2px;top:324.74px;line-height:0;white-space:pre;font-family:'Liberation Sans',sans-serif;font-size:12.3px;font-weight:bold;font-style:normal;color:#700038;transform:scaleX(0.7250);transform-origin:0 0;">L</div>
<div style="position:absolute;left:746.0px;top:337.54px;line-height:0;white-space:pre;font-family:'Liberation Sans',sans-serif;font-size:12.3px;font-weight:bold;font-style:normal;color:#700038;transform:scaleX(0.8800);transform-origin:0 0;">O</div>
<div style="position:absolute;left:746.6px;top:350.34px;line-height:0;white-space:pre;font-family:'Liberation Sans',sans-serif;font-size:12.3px;font-weight:bold;font-style:normal;color:#700038;transform:scaleX(0.9250);transform-origin:0 0;">T</div>
<div style="position:absolute;left:767px;top:307.67px;line-height:0;white-space:pre;font-family:'Liberation Sans',sans-serif;font-size:12.5px;font-weight:bold;font-style:normal;color:#700038;transform:scaleX(0.9335);transform-origin:0 0;">Scale</div>
<div style="position:absolute;left:767px;top:333.67px;line-height:0;white-space:pre;font-family:'Liberation Sans',sans-serif;font-size:12.5px;font-weight:bold;font-style:normal;color:#700038;transform:scaleX(0.9994);transform-origin:0 0;">Size</div>
<div style="position:absolute;left:767.5px;top:359.67px;line-height:0;white-space:pre;font-family:'Liberation Sans',sans-serif;font-size:12.5px;font-weight:bold;font-style:normal;color:#700038;transform:scaleX(0.9625);transform-origin:0 0;">Scroll range x1.25</div>
<div style="position:absolute;left:878px;top:353px;width:11px;height:11px;background:#fff;border:1px solid #333;"></div>
<div style="position:absolute;left:805px;top:298px;width:269px;height:19px;background:#fff8d0;"></div>
<div style="position:absolute;left:810px;top:303px;width:258px;height:4px;background:#e0e0e0;border:1px solid #d0d0d0;box-sizing:border-box;"></div>
<svg style="position:absolute;left:805px;top:298px" width="269" height="19"><rect x="8.3" y="15" width="1" height="4" fill="#6a6a6a"/><rect x="20.9" y="15" width="1" height="3" fill="#6a6a6a"/><rect x="33.5" y="15" width="1" height="3" fill="#6a6a6a"/><rect x="46.1" y="15" width="1" height="3" fill="#6a6a6a"/><rect x="58.7" y="15" width="1" height="3" fill="#6a6a6a"/><rect x="71.3" y="15" width="1" height="3" fill="#6a6a6a"/><rect x="84.0" y="15" width="1" height="3" fill="#6a6a6a"/><rect x="96.6" y="15" width="1" height="3" fill="#6a6a6a"/><rect x="109.2" y="15" width="1" height="3" fill="#6a6a6a"/><rect x="121.8" y="15" width="1" height="3" fill="#6a6a6a"/><rect x="134.4" y="15" width="1" height="3" fill="#6a6a6a"/><rect x="147.0" y="15" width="1" height="3" fill="#6a6a6a"/><rect x="159.6" y="15" width="1" height="3" fill="#6a6a6a"/><rect x="172.2" y="15" width="1" height="3" fill="#6a6a6a"/><rect x="184.8" y="15" width="1" height="3" fill="#6a6a6a"/><rect x="197.4" y="15" width="1" height="3" fill="#6a6a6a"/><rect x="210.1" y="15" width="1" height="3" fill="#6a6a6a"/><rect x="222.7" y="15" width="1" height="3" fill="#6a6a6a"/><rect x="235.3" y="15" width="1" height="3" fill="#6a6a6a"/><rect x="247.9" y="15" width="1" height="3" fill="#6a6a6a"/><rect x="260.5" y="15" width="1" height="4" fill="#6a6a6a"/></svg>
<svg style="position:absolute;left:914px;top:300px" width="8" height="12"><path d="M0.5 1 H7.5 V8 L4 11 L0.5 8 Z" fill="#0078d7"/></svg>
<div style="position:absolute;left:796px;top:323px;width:163px;height:23px;background:#f0fff0;border-top:2px solid #6e6e6e;border-left:2px solid #6e6e6e;border-right:1px solid #fff;border-bottom:1px solid #fff;box-sizing:border-box;"></div>
<svg style="position:absolute;left:806px;top:328px" width="13" height="13"><circle cx="6.5" cy="6.5" r="6" fill="#fff" stroke="#333"/><circle cx="6.5" cy="6.5" r="3.3" fill="#333"/></svg>
<div style="position:absolute;left:825px;top:334.17px;line-height:0;white-space:pre;font-family:'Liberation Sans',sans-serif;font-size:12.5px;font-weight:bold;font-style:normal;color:#700038;transform:scaleX(0.8636);transform-origin:0 0;">normal</div>
<svg style="position:absolute;left:870px;top:328px" width="13" height="13"><circle cx="6.5" cy="6.5" r="6" fill="#fff" stroke="#333"/></svg>
<div style="position:absolute;left:888.5px;top:334.17px;line-height:0;white-space:pre;font-family:'Liberation Sans',sans-serif;font-size:12.5px;font-weight:bold;font-style:normal;color:#700038;transform:scaleX(1.0350);transform-origin:0 0;">x 2</div>
<svg style="position:absolute;left:914px;top:328px" width="13" height="13"><circle cx="6.5" cy="6.5" r="6" fill="#fff" stroke="#333"/></svg>
<div style="position:absolute;left:933px;top:334.17px;line-height:0;white-space:pre;font-family:'Liberation Sans',sans-serif;font-size:12.5px;font-weight:bold;font-style:normal;color:#700038;transform:scaleX(0.9775);transform-origin:0 0;">x 5</div>
<div style="position:absolute;left:982px;top:334.67px;line-height:0;white-space:pre;font-family:'Liberation Sans',sans-serif;font-size:12.5px;font-weight:bold;font-style:normal;color:#800080;transform:scaleX(0.9045);transform-origin:0 0;">Form opacity</div>
<div style="position:absolute;left:960px;top:346px;width:115px;height:21px;background:#fff8d0;"></div>
<div style="position:absolute;left:966px;top:352px;width:102px;height:4px;background:#e0e0e0;border:1px solid #d0d0d0;box-sizing:border-box;"></div>
<svg style="position:absolute;left:960px;top:346px" width="115" height="21"><rect x="10.6" y="17.5" width="1" height="3" fill="#6a6a6a"/><rect x="29.3" y="17.5" width="1" height="3" fill="#6a6a6a"/><rect x="48.0" y="17.5" width="1" height="3" fill="#6a6a6a"/><rect x="66.8" y="17.5" width="1" height="3" fill="#6a6a6a"/><rect x="85.5" y="17.5" width="1" height="3" fill="#6a6a6a"/><rect x="104.2" y="17.5" width="1" height="3" fill="#6a6a6a"/></svg>
<svg style="position:absolute;left:1060px;top:347px" width="9" height="14"><path d="M0.5 1 H8 V10 L4.2 13.5 L0.5 10 Z" fill="#0078d7"/></svg>
<div style="position:absolute;left:752px;top:389.19px;line-height:0;white-space:pre;font-family:'Liberation Sans',sans-serif;font-size:11px;font-weight:normal;font-style:normal;color:#000;transform:scaleX(0.9584);transform-origin:0 0;">RMS fit -1.5 ±0.0 km</div>
<div style="position:absolute;left:744px;top:402px;width:327px;height:339px;background:#fff;border-top:2px solid #6e6e6e;border-left:2px solid #6e6e6e;border-right:1px solid #fff;border-bottom:1px solid #fff;box-sizing:border-box;"></div>
<div style="position:absolute;left:751px;top:410px;width:30px;height:2px;background:#4b0082;"></div>
<div style="position:absolute;left:784px;top:410px;width:31px;height:2px;background:#4b0082;"></div>
<div style="position:absolute;left:751px;top:422px;width:66px;height:2px;background:#ff0000;"></div>
<svg style="position:absolute;left:744px;top:402px" width="100" height="40"><circle cx="9.4" cy="33.30000000000001" r="1.6" fill="none" stroke="#ff69b4" stroke-width="1"/><circle cx="24.4" cy="33.30000000000001" r="1.6" fill="none" stroke="#ff69b4" stroke-width="1"/><circle cx="39.4" cy="33.30000000000001" r="1.6" fill="none" stroke="#ff69b4" stroke-width="1"/><circle cx="54.5" cy="33.30000000000001" r="1.6" fill="none" stroke="#ff69b4" stroke-width="1"/><circle cx="69.5" cy="33.30000000000001" r="1.6" fill="none" stroke="#ff69b4" stroke-width="1"/></svg>
<div style="position:absolute;left:839.7px;top:413.31px;line-height:0;white-space:pre;font-family:'Liberation Mono',sans-serif;font-size:12px;font-weight:normal;font-style:normal;color:#000;letter-spacing:1.03px;">1(M) M Camilleri, near Auckl</div>
<div style="position:absolute;left:839.7px;top:425.31px;line-height:0;white-space:pre;font-family:'Liberation Mono',sans-serif;font-size:12px;font-weight:normal;font-style:normal;color:#000;letter-spacing:1.03px;">2    V Bao, near Auckland</div>
<div style="position:absolute;left:839.7px;top:437.31px;line-height:0;white-space:pre;font-family:'Liberation Mono',sans-serif;font-size:12px;font-weight:normal;font-style:normal;color:#000;letter-spacing:1.03px;">3(P) Predicted</div>
<div style="position:absolute;left:1070px;top:404px;width:1px;height:336px;background:#e8e8e8;"></div>
<div style="position:absolute;left:746px;top:724px;width:324px;height:15px;background:#f0f0f0;"></div>
<svg style="position:absolute;left:749px;top:727px" width="10" height="10"><path d="M6.5 1.5 L3 5 L6.5 8.5" fill="none" stroke="#606060" stroke-width="2"/></svg>
<svg style="position:absolute;left:1057px;top:727px" width="10" height="10"><path d="M3.5 1.5 L7 5 L3.5 8.5" fill="none" stroke="#606060" stroke-width="2"/></svg>
<div style="position:absolute;left:763px;top:724px;width:257px;height:15px;background:#c8c8c8;"></div>
</div></body></html>
